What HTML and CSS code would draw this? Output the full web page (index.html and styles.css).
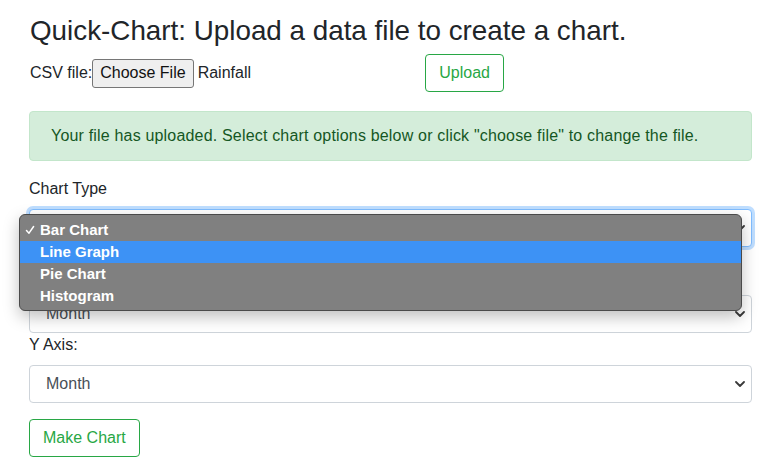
FILE: index.html
```html
<!DOCTYPE html>
<html lang="en">
<head>
<meta charset="utf-8">
<title>Quick-Chart</title>
<link rel="stylesheet" href="styles.css">
</head>
<body>
<div class="page">
  <h1 class="title">Quick-Chart: Upload a data file to create a chart.</h1>
  <form class="upload-row">
    <span class="csv-label">CSV file:</span>
    <div class="file-field">
      <span class="file-btn">Choose File</span>
      <span class="file-name">Rainfall</span>
    </div>
    <span class="btn btn-outline">Upload</span>
  </form>
  <div class="alert">Your file has uploaded. Select chart options below or click "choose file" to change the file.</div>

  <div class="group group-spaced">
    <label class="label">Chart Type</label>
    <div class="select select-focus">
      <span class="select-text">Bar Chart</span>
      <svg class="chev" width="10" height="6" viewBox="0 0 10 6"><path d="M1 1 L5 5 L9 1" fill="none" stroke="#3a3a3a" stroke-width="1.8" stroke-linecap="round" stroke-linejoin="round"/></svg>
    </div>
    <div class="menu">
      <div class="menu-item"><svg class="check" width="10" height="10" viewBox="0 0 10 10"><path d="M1.5 5.5 L4 8.2 L8.6 1.5" fill="none" stroke="#fff" stroke-width="1.5" stroke-linecap="round" stroke-linejoin="round"/></svg>Bar Chart</div>
      <div class="menu-item menu-item-active">Line Graph</div>
      <div class="menu-item">Pie Chart</div>
      <div class="menu-item">Histogram</div>
    </div>
  </div>

  <div class="group">
    <label class="label">X Axis:</label>
    <div class="select">
      <span class="select-text">Month</span>
      <svg class="chev" width="10" height="6" viewBox="0 0 10 6"><path d="M1 1 L5 5 L9 1" fill="none" stroke="#3a3a3a" stroke-width="1.8" stroke-linecap="round" stroke-linejoin="round"/></svg>
    </div>
  </div>

  <div class="group">
    <label class="label">Y Axis:</label>
    <div class="select">
      <span class="select-text">Month</span>
      <svg class="chev" width="10" height="6" viewBox="0 0 10 6"><path d="M1 1 L5 5 L9 1" fill="none" stroke="#3a3a3a" stroke-width="1.8" stroke-linecap="round" stroke-linejoin="round"/></svg>
    </div>
  </div>

  <div class="actions">
    <span class="btn btn-outline">Make Chart</span>
  </div>
</div>
</body>
</html>
```
FILE: styles.css
```css
* { box-sizing: border-box; }
html, body { margin: 0; padding: 0; background: #fff; }
body {
  font-family: "Liberation Sans", Arial, sans-serif;
  font-size: 16px;
  line-height: 1.5;
  color: #212529;
}
.page {
  width: 779px;
  padding: 14px 27px 0 29px;
}
.title {
  margin: 0 0 6px 1px;
  font-size: 27.8px;
  font-weight: 500;
  line-height: 34px;
}
.upload-row {
  display: flex;
  align-items: center;
  height: 38px;
  margin: 1px 0 19px 1px;
}
.csv-label { margin-right: 0; }
.file-field {
  display: flex;
  align-items: center;
  width: 333px;
}
.file-btn {
  display: inline-flex;
  align-items: center;
  height: 29px;
  padding: 0 7px;
  background: #efefef;
  border: 1px solid #767676;
  border-radius: 3px;
  font-size: 16px;
  color: #111;
}
.file-name { margin-left: 4px; }
.btn {
  display: inline-flex;
  align-items: center;
  justify-content: center;
  height: 38px;
  padding: 0 13px;
  border-radius: 4px;
  font-size: 16px;
}
.btn-outline {
  color: #28a745;
  border: 1px solid #28a745;
  background: #fff;
}
.alert {
  height: 50px;
  padding: 12px 20px 12px 21px;
  margin-bottom: 16px;
  color: #155724;
  background: #d4edda;
  border: 1px solid #c3e6cb;
  border-radius: 4px;
  letter-spacing: 0.18px;
}
.group { position: relative; }
.group-spaced { margin-bottom: 16px; }
.label {
  display: block;
  height: 24px;
  margin-bottom: 8px;
}
.select {
  display: flex;
  align-items: center;
  justify-content: space-between;
  height: 38px;
  padding: 0 6px 0 16px;
  border: 1px solid #ced4da;
  border-radius: 4px;
  color: #495057;
  background: #fff;
}
.select-focus {
  border-color: #80bdff;
  box-shadow: 0 0 0 3px rgba(0, 123, 255, 0.25);
}
.chev { display: block; }
.menu {
  position: absolute;
  left: -10px;
  top: 37px;
  width: 723px;
  height: 97px;
  padding-top: 4px;
  background: #808080;
  border: 1px solid #4a4a4a;
  border-radius: 6px;
  box-shadow: 0 6px 16px rgba(0, 0, 0, 0.25);
  z-index: 5;
}
.menu-item {
  position: relative;
  height: 22px;
  line-height: 22px;
  padding-left: 20px;
  font-size: 15px;
  font-weight: 700;
  color: #fff;
}
.menu-item-active { background: #3d92f5; }
.check {
  position: absolute;
  left: 5px;
  top: 6px;
}
.actions { margin-top: 16px; }
```
